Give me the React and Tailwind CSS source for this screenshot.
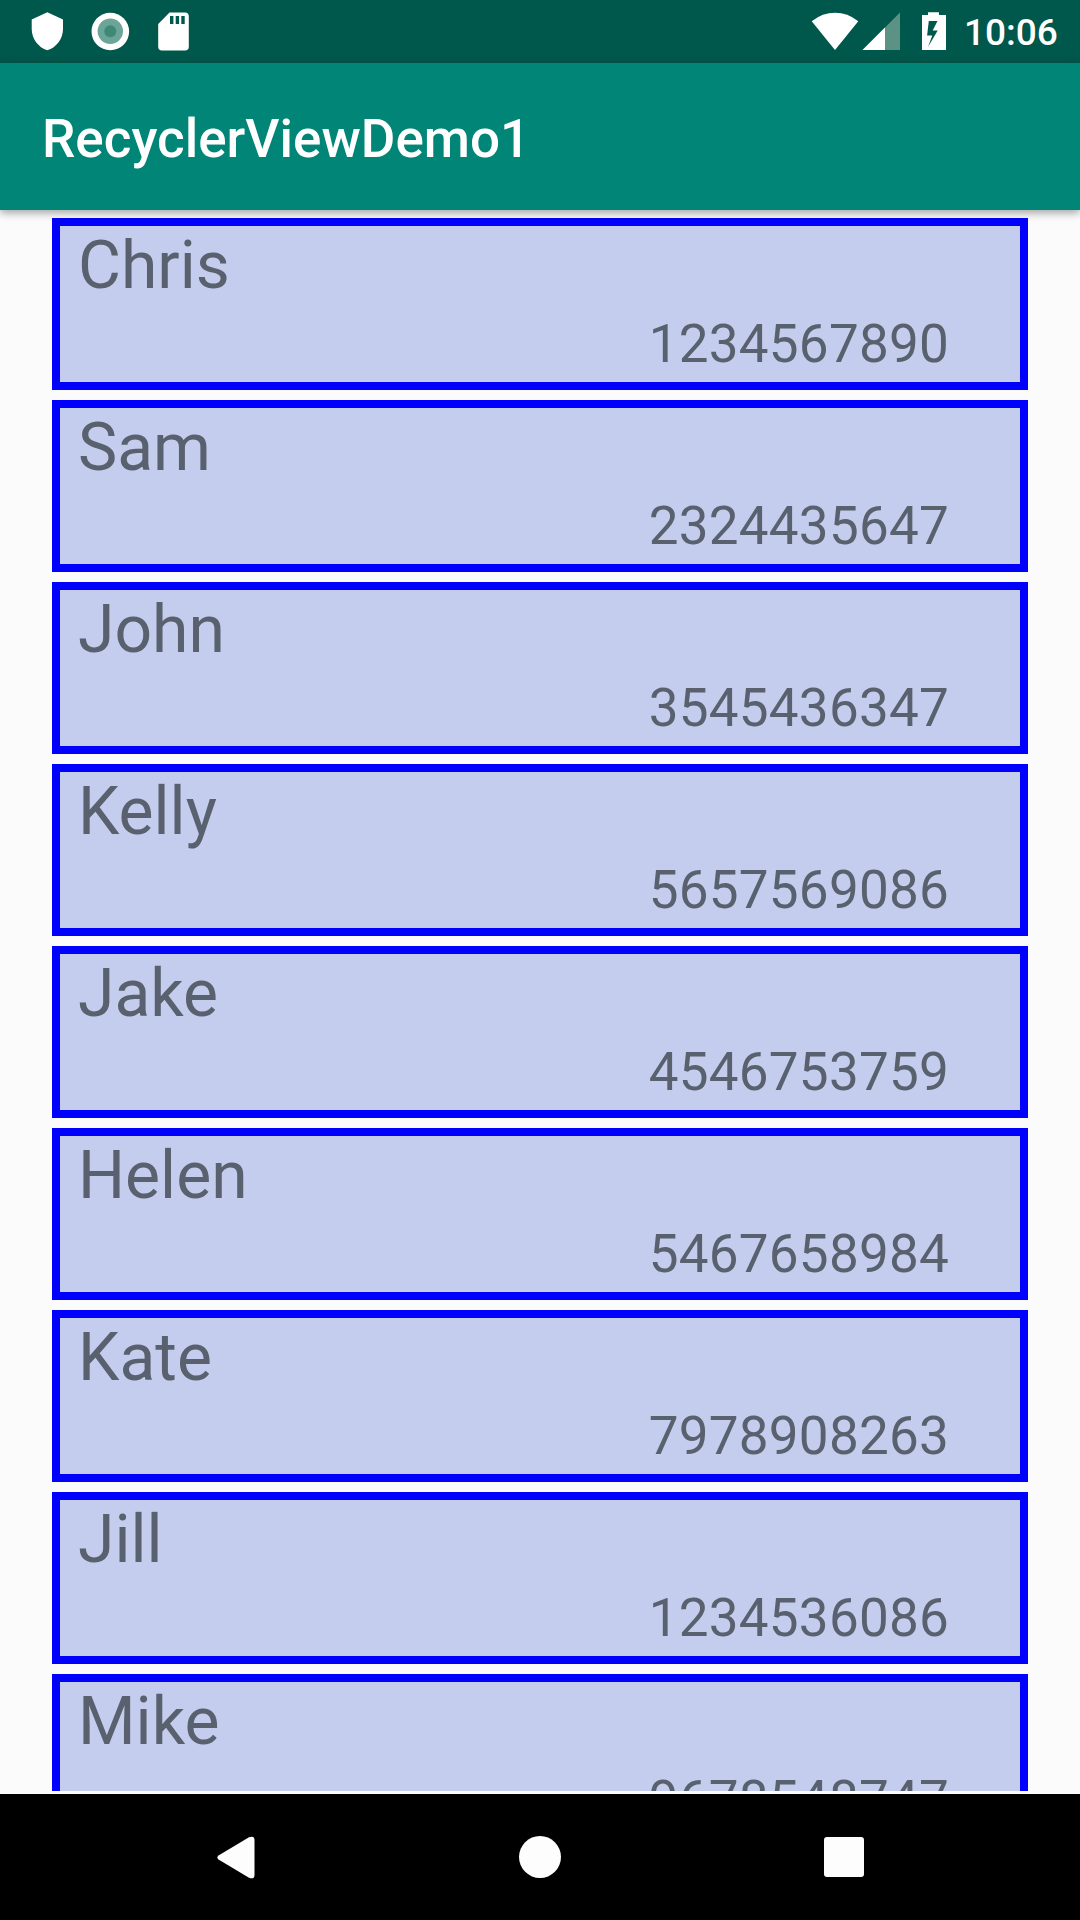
const contacts = [
  ["Chris", "1234567890"],
  ["Sam", "2324435647"],
  ["John", "3545436347"],
  ["Kelly", "5657569086"],
  ["Jake", "4546753759"],
  ["Helen", "5467658984"],
  ["Kate", "7978908263"],
  ["Jill", "1234536086"],
  ["Mike", "9678548747"],
];

function StatusBar() {
  return (
    <div className="flex h-[63px] shrink-0 items-start justify-between bg-[#00574b] text-white">
      <svg width="200" height="63" fill="#fff">
        <path d="M47.3 12.3 63 19.5V29c0 9.5-6.5 18.5-15.7 21.3C38.200 47.500 31.700 38.500 31.700 29v-9.500z" />
        <circle cx="110.300" cy="31.500" r="18.800" />
        <circle cx="110.300" cy="31.300" r="12.700" fill="#6ba597" />
        <circle cx="110.300" cy="31.300" r="6" fill="#3f8876" />
        <path
          fillRule="evenodd"
          d="M169.500 12.500h15.500a3.800 3.800 0 0 1 3.800 3.800v30.400a3.800 3.800 0 0 1-3.800 3.800h-23a3.800 3.800 0 0 1-3.800-3.800V24zM170 16v8h3.400v-8zM175.700 16v8h3.400v-8zM181.300 16v8h3.400v-8z"
        />
      </svg>
      <div className="flex items-start">
        <svg width="153" height="63" fill="#fff">
          <path d="M.7 21.200Q11.500 12.800 24 12.800t23.300 8.400L24 50z" />
          <path d="M89 12.500V50H51.500z" fill="#5c9284" />
          <path d="M74 27.500V50H51.500z" />
          <path
            fillRule="evenodd"
            d="M117 12.200h11V15h7v35h-24V15h6zM117.800 21l-1.700 14.500h5.200L117 47l9.700-16.500h-5L126.500 21z"
          />
        </svg>
        <div className="mt-[11px] w-[116px] text-[37px] leading-[43px] font-medium">10:06</div>
      </div>
    </div>
  );
}

function ContactCard({ name, phone }) {
  return (
    <div className="flex h-[172px] shrink-0 flex-col border-8 border-[#0000fd] bg-[#c5cdee] pt-px pr-[71px] pl-[18px] text-[#59616f]">
      <div className="text-[66px] leading-[77px]">{name}</div>
      <div className="mt-[9px] text-right text-[53px] leading-[62px] tracking-[0.24px]">{phone}</div>
    </div>
  );
}

function NavigationBar() {
  return (
    <div className="flex h-[126px] shrink-0 items-center justify-between bg-black pr-[216px] pl-[217px]">
      <svg width="38" height="43" fill="#fdfdfd">
        <path d="M1.500 19.500 32 1.300Q37.500-.8 37.500 4v35Q37.500 43.800 32 41.700L1.500 23.500Q-.8 21.500 1.500 19.500z" />
      </svg>
      <div className="ml-px size-[42px] rounded-full bg-[#fdfdfd]" />
      <div className="size-[40px] rounded-[3px] bg-[#fdfdfd]" />
    </div>
  );
}

export default function App() {
  return (
    <div className="flex h-[1920px] w-[1080px] flex-col overflow-hidden bg-[#fbfbfb] font-['Roboto',sans-serif]">
      <StatusBar />
      <div className="z-10 flex h-[147px] shrink-0 items-center bg-[#008577] pl-[42px] text-[53px] leading-[62px] font-medium text-white shadow-[0_3px_8px_rgba(0,0,0,0.35)]">
        <span className="mt-[4px]">RecyclerViewDemo1</span>
      </div>
      <div className="mb-[3px] flex h-[1581px] shrink-0 flex-col gap-[10px] overflow-hidden px-[52px] pt-[8px]">
        {contacts.map(([name, phone]) => (
          <ContactCard key={name} name={name} phone={phone} />
        ))}
      </div>
      <NavigationBar />
    </div>
  );
}
